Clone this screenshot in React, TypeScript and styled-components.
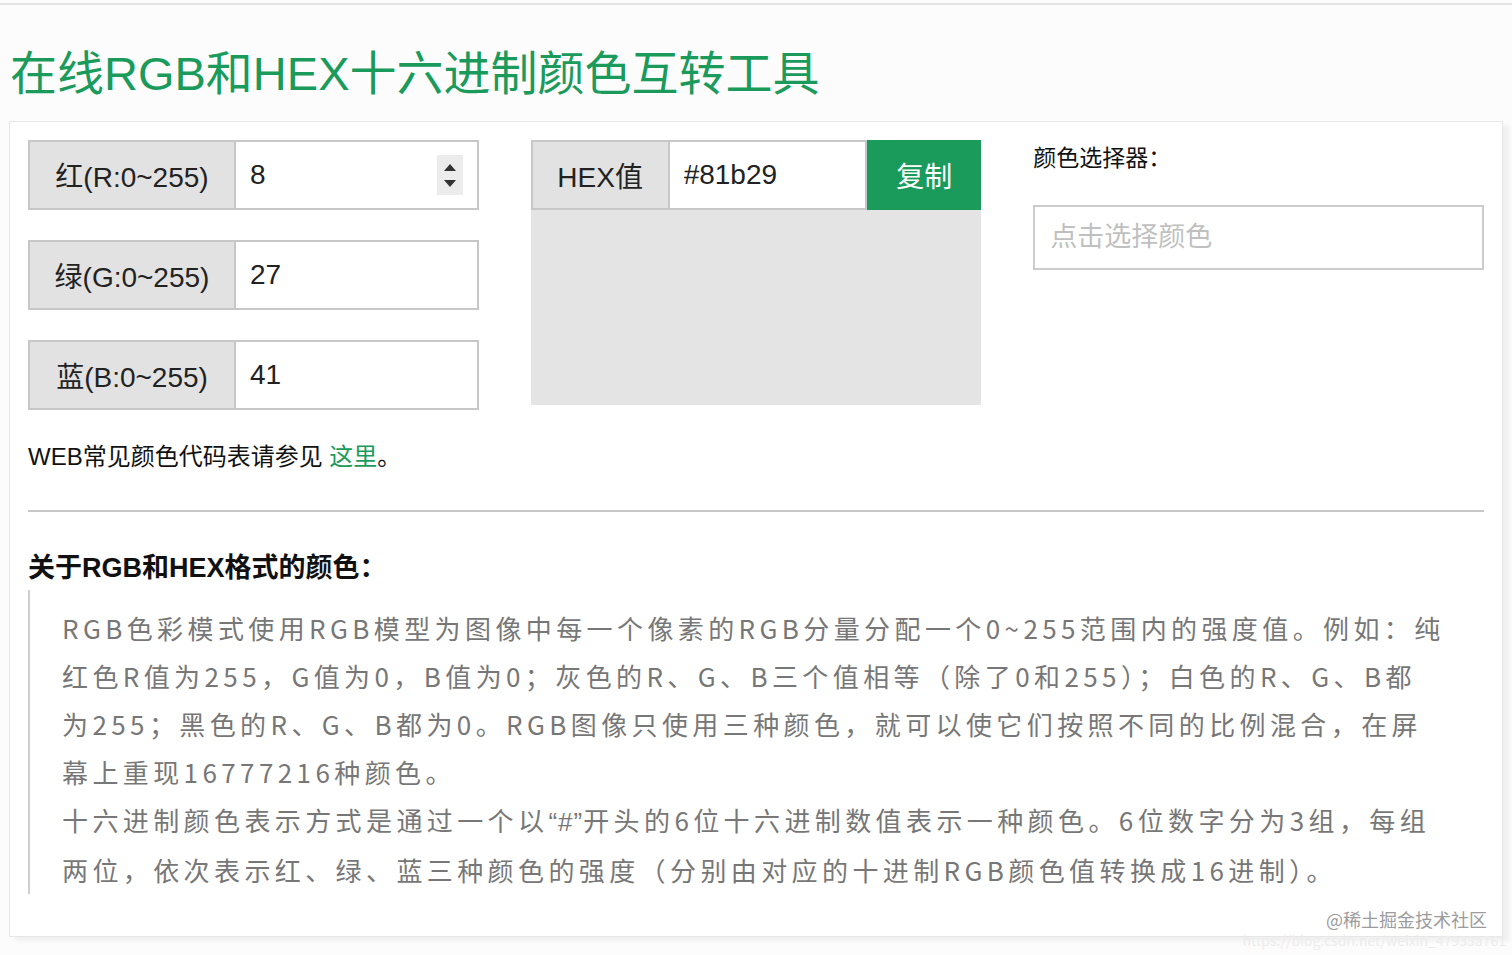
import React, { useState } from 'react';
import styled, { createGlobalStyle } from 'styled-components';

const SANS = `"Liberation Sans", "Noto Sans CJK SC", sans-serif`;
const CJK = `"Noto Sans CJK SC", "Liberation Sans", sans-serif`;
const GREEN = '#1a9b5b';

const GlobalStyle = createGlobalStyle`
  * {
    box-sizing: border-box;
  }
  body {
    margin: 0;
    background: #fcfcfc;
    font-family: ${SANS};
    color: #222;
  }
`;

const rgbFields = [
  { label: '红(R:0~255)', value: '8', spinner: true },
  { label: '绿(G:0~255)', value: '27' },
  { label: '蓝(B:0~255)', value: '41' },
];

const aboutLines = [
  'RGB色彩模式使用RGB模型为图像中每一个像素的RGB分量分配一个0~255范围内的强度值。例如：纯',
  '红色R值为255，G值为0，B值为0；灰色的R、G、B三个值相等（除了0和255）；白色的R、G、B都',
  '为255；黑色的R、G、B都为0。RGB图像只使用三种颜色，就可以使它们按照不同的比例混合，在屏',
  '幕上重现16777216种颜色。',
  ['十六进制颜色表示方式是通过一个以', '“#”', '开头的6位十六进制数值表示一种颜色。6位数字分为3组，每组'],
  '两位，依次表示红、绿、蓝三种颜色的强度（分别由对应的十进制RGB颜色值转换成16进制）。',
];

const App = () => {
  const [hex, setHex] = useState('#81b29');

  return (
    <>
      <GlobalStyle />
      <Page>
        <TopRule />
        <Title>在线RGB和HEX十六进制颜色互转工具</Title>
        <Panel>
          <ToolGrid>
            <Column>
              {rgbFields.map((f) => (
                <FieldRow key={f.label}>
                  <FieldLabel>{f.label}</FieldLabel>
                  <FieldInput defaultValue={f.value} />
                  {f.spinner && (
                    <Spinner>
                      <Arrow $up />
                      <Arrow />
                    </Spinner>
                  )}
                </FieldRow>
              ))}
            </Column>

            <div>
              <HexRow>
                <FieldRow $grow>
                  <FieldLabel $width={137}>HEX值</FieldLabel>
                  <FieldInput value={hex} onChange={(e) => setHex(e.target.value)} />
                </FieldRow>
                <CopyButton>复制</CopyButton>
              </HexRow>
              <Preview />
            </div>

            <div>
              <PickerLabel>颜色选择器：</PickerLabel>
              <PickerInput placeholder="点击选择颜色" />
            </div>
          </ToolGrid>

          <TableNote>
            WEB常见颜色代码表请参见 <NoteLink href="#">这里</NoteLink>。
          </TableNote>

          <Divider />

          <SectionHeading>关于RGB和HEX格式的颜色：</SectionHeading>
          <Quote>
            {aboutLines.map((line, i) =>
              Array.isArray(line) ? (
                <QuoteLine key={i}>
                  {line[0]}
                  <Latin>{line[1]}</Latin>
                  {line[2]}
                </QuoteLine>
              ) : (
                <QuoteLine key={i}>{line}</QuoteLine>
              )
            )}
          </Quote>
        </Panel>

        <Watermark>
          <WatermarkBrand>@稀土掘金技术社区</WatermarkBrand>
          <WatermarkUrl>https://blog.csdn.net/weixin_47933a761</WatermarkUrl>
        </Watermark>
      </Page>
    </>
  );
};

export default App;

const Page = styled.div`
  position: relative;
  width: 1512px;
  height: 955px;
  overflow: hidden;
  padding: 0 9px;
`;

const TopRule = styled.div`
  height: 2px;
  margin: 3px -9px 0;
  background: #e4e4e4;
`;

const Title = styled.h1`
  margin: 39px 0 17px 1px;
  font-family: ${SANS};
  font-size: 47px;
  line-height: 60px;
  font-weight: normal;
  color: ${GREEN};
  white-space: nowrap;
`;

const Panel = styled.div`
  width: 1494px;
  height: 816px;
  padding: 18px 18px 0;
  background: #fff;
  border: 1px solid #e6e6e6;
  box-shadow: 6px 4px 4px rgba(0, 0, 0, 0.05);
`;

const ToolGrid = styled.div`
  display: grid;
  grid-template-columns: repeat(3, minmax(0, 1fr));
  column-gap: 52px;
  align-items: start;
`;

const Column = styled.div`
  display: flex;
  flex-direction: column;
  gap: 30px;
`;

const FieldRow = styled.div<{ $grow?: boolean }>`
  position: relative;
  display: flex;
  height: 70px;
  min-width: 0;
  flex: ${(p) => (p.$grow ? 1 : 'none')};
  border: 2px solid #c7c7c7;
  background: #fff;
`;

const FieldLabel = styled.div<{ $width?: number }>`
  flex: none;
  width: ${(p) => p.$width || 206}px;
  display: flex;
  align-items: center;
  justify-content: center;
  background: #e2e2e2;
  border-right: 2px solid #c7c7c7;
  font-size: 28px;
  color: #222;
  white-space: nowrap;
`;

const FieldInput = styled.input`
  flex: 1;
  width: 0;
  min-width: 0;
  border: none;
  outline: none;
  background: transparent;
  padding: 0 14px;
  font-family: ${SANS};
  font-size: 28px;
  color: #222;
`;

const Spinner = styled.div`
  position: absolute;
  right: 14px;
  top: 13px;
  width: 26px;
  height: 40px;
  display: flex;
  flex-direction: column;
  align-items: center;
  justify-content: center;
  gap: 9px;
  background: #ececec;
`;

const Arrow = styled.span<{ $up?: boolean }>`
  width: 0;
  height: 0;
  border-left: 6px solid transparent;
  border-right: 6px solid transparent;
  ${(p) => (p.$up ? 'border-bottom: 7px solid #333;' : 'border-top: 7px solid #333;')}
`;

const HexRow = styled.div`
  display: flex;
  height: 70px;
`;

const CopyButton = styled.button`
  flex: none;
  width: 114px;
  height: 70px;
  border: none;
  background: ${GREEN};
  color: #fff;
  font-family: ${SANS};
  font-size: 28px;
  cursor: pointer;
`;

const Preview = styled.div`
  height: 195px;
  background: #e4e4e4;
`;

const PickerLabel = styled.div`
  font-size: 23px;
  line-height: 36px;
  color: #111;
  white-space: nowrap;
`;

const PickerInput = styled.input`
  display: block;
  width: 100%;
  height: 65px;
  margin-top: 29px;
  padding: 0 15px;
  border: 2px solid #cccccc;
  outline: none;
  font-family: ${SANS};
  font-size: 27px;
  color: #222;

  &::placeholder {
    color: #c0c0c0;
  }
`;

const TableNote = styled.p`
  margin: 32px 0 0;
  font-size: 24px;
  line-height: 30px;
  color: #111;
`;

const NoteLink = styled.a`
  color: ${GREEN};
  text-decoration: none;
`;

const Divider = styled.hr`
  margin: 38px 0 0;
  height: 2px;
  border: none;
  background: #c8c8c8;
`;

const SectionHeading = styled.h3`
  margin: 41px 0 0;
  font-size: 27px;
  line-height: 30px;
  font-weight: bold;
  color: #111;
`;

const Quote = styled.blockquote`
  margin: 7px 0 0;
  padding: 14px 0 0 32px;
  border-left: 2px solid #cfcfcf;
  font-family: ${CJK};
  font-size: 26px;
  line-height: 48px;
  letter-spacing: 4.4px;
  color: #777;
`;

const QuoteLine = styled.div`
  white-space: nowrap;
`;

const Latin = styled.span`
  font-family: "Liberation Sans", sans-serif;
  letter-spacing: 1px;
`;

const Watermark = styled.div`
  position: absolute;
  right: 6px;
  bottom: 6px;
  display: flex;
  flex-direction: column;
  align-items: flex-end;
  font-family: ${CJK};
  pointer-events: none;
`;

const WatermarkBrand = styled.div`
  margin-right: 19px;
  font-size: 18px;
  line-height: 24px;
  color: #9c9c9c;
`;

const WatermarkUrl = styled.div`
  font-size: 14px;
  line-height: 18px;
  color: #ececec;
`;
